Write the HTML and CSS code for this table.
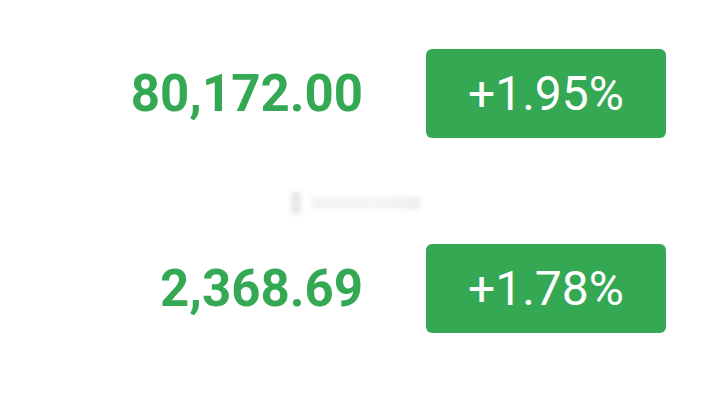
FILE: index.html
```html
<!DOCTYPE html>
<html lang="en">
<head>
<meta charset="utf-8">
<title>Quotes</title>
<link rel="stylesheet" href="styles.css">
</head>
<body>
<main class="list">
  <div class="row">
    <div class="value">80,172.00</div>
    <div class="badge">+1.95%</div>
  </div>
  <div class="divider">
    <div class="ghost">
      <span class="ghost-icon"></span>
      <span class="ghost-text"></span>
    </div>
  </div>
  <div class="row">
    <div class="value">2,368.69</div>
    <div class="badge">+1.78%</div>
  </div>
</main>
</body>
</html>
```

FILE: styles.css
```css
html, body {
  margin: 0;
  padding: 0;
  background: #ffffff;
}
body {
  font-family: Roboto, "Noto Sans", sans-serif;
  width: 711px;
  height: 405px;
  overflow: hidden;
}
.list {
  display: flex;
  flex-direction: column;
  padding-top: 49px;
}
.row {
  display: grid;
  grid-template-columns: 363px 240px;
  column-gap: 63px;
  align-items: center;
}
.value {
  text-align: right;
  font-size: 51px;
  font-weight: 700;
  color: #34a853;
  line-height: 1;
  letter-spacing: 0;
}
.badge {
  height: 89px;
  border-radius: 6px;
  background: #34a853;
  color: #ffffff;
  font-size: 48px;
  font-weight: 400;
  display: flex;
  align-items: center;
  justify-content: center;
}
.divider {
  height: 106px;
  display: flex;
  justify-content: center;
  align-items: flex-start;
  box-sizing: border-box;
  padding-top: 54px;
}
.ghost {
  display: flex;
  align-items: center;
  gap: 10px;
  filter: blur(2px);
}
.ghost-icon {
  width: 10px;
  height: 22px;
  background: #e8e8e8;
  border-radius: 2px;
}
.ghost-text {
  width: 110px;
  height: 12px;
  background: linear-gradient(90deg, #f2f2f2, #f5f5f5 60%, #eeeeee);
}
```
